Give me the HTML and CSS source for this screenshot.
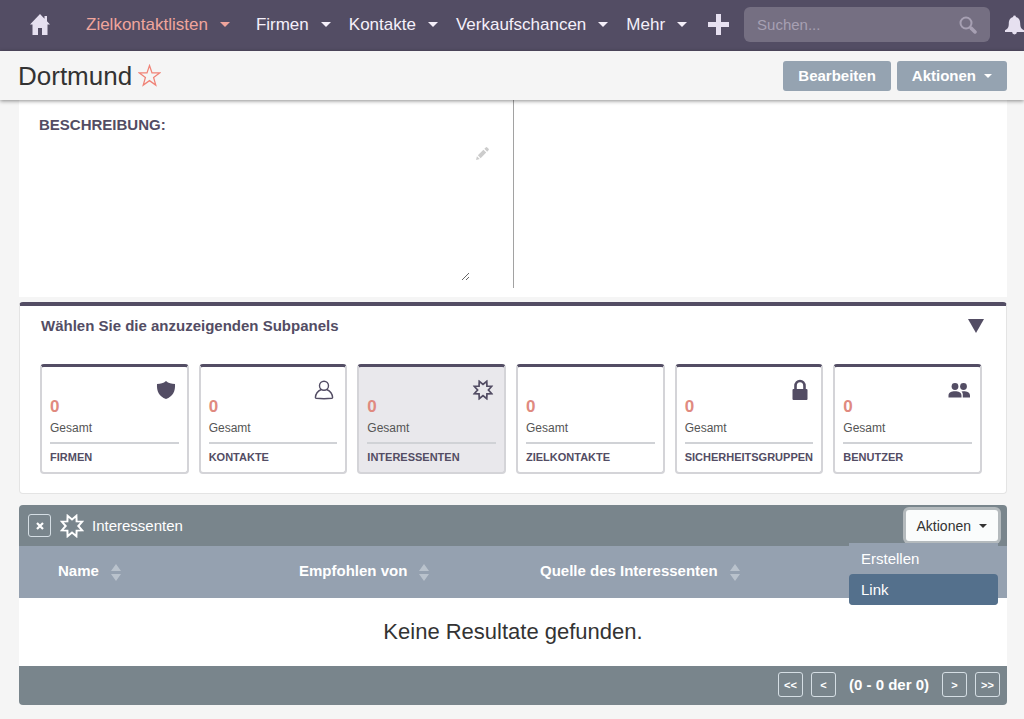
FILE: index.html
```html
<!DOCTYPE html>
<html lang="de">
<head>
<meta charset="utf-8">
<meta name="viewport" content="width=device-width, initial-scale=1">
<title>Dortmund</title>
<link rel="stylesheet" href="styles.css">
</head>
<body>
<svg class="sprite" aria-hidden="true">
  <symbol id="caret" viewBox="0 0 10 5"><path d="M0 0h10L5 5z" fill="currentColor"/></symbol>
  <symbol id="burst" viewBox="0 0 24 24"><path d="M22.200 7.600 18.300 12l3.900 4.400-5.600.2-.2 5.600L12 18.500l-4.400 3.700-.2-5.600-5.600-.2L5.700 12 1.800 7.600l5.600-.2.200-5.600L12 5.500l4.400-3.700.2 5.600z" fill="none" stroke="currentColor" stroke-width="2"/></symbol>
  <symbol id="sort" viewBox="0 0 10 18"><path d="M0 7 5 0l5 7zM0 10h10l-5 7z" fill="currentColor"/></symbol>
</svg>

<nav class="topbar">
  <a class="home" href="#" aria-label="Start"><svg viewBox="0 0 20 21"><path d="M10 0 0 10.500h2.500V21H8v-7h4v7h5.500V10.500H20l-3-3.200V2h-2.500v2.700z" fill="currentColor"/></svg></a>
  <div class="menu">
    <a class="menu-item active" href="#">Zielkontaktlisten<svg class="caret"><use href="#caret"/></svg></a>
    <a class="menu-item" href="#">Firmen<svg class="caret"><use href="#caret"/></svg></a>
    <a class="menu-item" href="#">Kontakte<svg class="caret"><use href="#caret"/></svg></a>
    <a class="menu-item" href="#">Verkaufschancen<svg class="caret"><use href="#caret"/></svg></a>
    <a class="menu-item" href="#">Mehr<svg class="caret"><use href="#caret"/></svg></a>
  </div>
  <button class="add" type="button" aria-label="Neu"><svg viewBox="0 0 21 21"><path d="M8 0h5v8h8v5h-8v8H8v-8H0V8h8z" fill="currentColor"/></svg></button>
  <form class="search">
    <input class="search-input" type="search" aria-label="Suchen" placeholder="Suchen...">
    <button class="search-button" type="button" aria-label="Suche starten"><svg viewBox="0 0 18 18"><circle cx="7" cy="7" r="5.500" fill="none" stroke="currentColor" stroke-width="2"/><path d="m12 12 4 4" stroke="currentColor" stroke-width="3.500" stroke-linecap="round"/></svg></button>
  </form>
  <button class="bell" type="button" aria-label="Benachrichtigungen"><svg viewBox="0 0 20 21"><path d="M8.500 2.500a1.500 1.500 0 0 1 3 0C15 3.500 16 6.500 16 9.500c0 4.500 1.500 6 4 7V18.500H12.500a2.500 2.500 0 0 1-5 0H0v-2c2.500-1 4-2.500 4-7 0-3 1-6 4.500-7z" fill="currentColor"/></svg></button>
</nav>

<header class="titlebar">
  <h1 class="title">Dortmund</h1>
  <button class="favorite" type="button" aria-label="Favorit"><svg viewBox="0 0 22 22"><path d="m11 1.500 2.400 7h7.300l-5.800 4.400 2.100 7.300-6-4.300-6 4.300 2.100-7.300L1.300 8.500h7.300z" fill="none" stroke="currentColor" stroke-width="1.200"/></svg></button>
  <div class="title-actions">
    <button class="button" type="button">Bearbeiten</button>
    <button class="button" type="button">Aktionen<svg class="caret small"><use href="#caret"/></svg></button>
  </div>
</header>

<main class="content">
  <section class="detail">
    <div class="detail-field">
      <label class="field-label" for="description">BESCHREIBUNG:</label>
      <div class="field-body">
        <textarea class="description" id="description" readonly></textarea>
        <button class="edit" type="button" aria-label="Bearbeiten"><svg viewBox="0 0 14 14"><path d="M0 14 1 10l3 3zM2 9l6-6 3 3-6 6zM9 2l1.500-1.500q.8-.8 1.600 0l1.400 1.400q.8.800 0 1.600L12 5z" fill="currentColor"/></svg></button>
      </div>
    </div>
    <div class="detail-blank"></div>
  </section>

  <section class="selector">
    <div class="selector-head">
      <h2 class="selector-title">Wählen Sie die anzuzeigenden Subpanels</h2>
      <button class="toggle" type="button" aria-label="Einklappen"><svg viewBox="0 0 16 14"><path d="M0 0h16L8 14z" fill="currentColor"/></svg></button>
    </div>
    <div class="cards">
      <button class="card" type="button">
        <svg class="card-icon" viewBox="0 0 24 24"><path d="M12 3c2.500 2.300 5.500 3 9 3 .5 7-2 12.500-9 15C5 18.500 2.500 13 3 6c3.500 0 6.500-.7 9-3z" fill="currentColor"/></svg>
        <span class="count">0</span><span class="total">Gesamt</span><span class="name">FIRMEN</span>
      </button>
      <button class="card" type="button">
        <svg class="card-icon" viewBox="0 0 24 24"><g fill="none" stroke="currentColor" stroke-width="1.400"><circle cx="12" cy="7.800" r="4.500"/><path d="M9.300 11.500C6 13 3.600 16 3.400 19.500q0 .7.800.8 7.800.8 15.600 0 .8-.1.800-.8c-.2-3.500-2.600-6.500-5.900-8"/></g></svg>
        <span class="count">0</span><span class="total">Gesamt</span><span class="name">KONTAKTE</span>
      </button>
      <button class="card selected" type="button">
        <svg class="card-icon" viewBox="-2 -2 28 28"><use href="#burst" width="24" height="24"/></svg>
        <span class="count">0</span><span class="total">Gesamt</span><span class="name">INTERESSENTEN</span>
      </button>
      <button class="card" type="button">
        <span class="count">0</span><span class="total">Gesamt</span><span class="name">ZIELKONTAKTE</span>
      </button>
      <button class="card" type="button">
        <svg class="card-icon" viewBox="0 0 24 24"><rect x="4.500" y="11" width="15" height="11" rx="1" fill="currentColor"/><path d="M7.500 12V8a4.500 5 0 0 1 9 0v4" fill="none" stroke="currentColor" stroke-width="2.600"/></svg>
        <span class="count">0</span><span class="total">Gesamt</span><span class="name">SICHERHEITSGRUPPEN</span>
      </button>
      <button class="card" type="button">
        <svg class="card-icon" viewBox="0 0 24 24"><g fill="currentColor"><circle cx="8" cy="8.500" r="3.400"/><circle cx="16.500" cy="8.500" r="3.400"/><path d="M1.500 19.500v-2c0-3 3-4.200 6.500-4.200s6.500 1.200 6.500 4.200v2zM15.800 19.500H23v-2c0-3-3-4.200-6.500-4.200l-2 .200c1 1 1.500 2.300 1.300 4z"/></g></svg>
        <span class="count">0</span><span class="total">Gesamt</span><span class="name">BENUTZER</span>
      </button>
    </div>
  </section>

  <section class="subpanel">
    <div class="subpanel-head">
      <button class="square close" type="button" aria-label="Schließen"><svg viewBox="0 0 8 8"><path d="m1 1 6 6M7 1 1 7" stroke="currentColor" stroke-width="2.200"/></svg></button>
      <svg class="subpanel-icon"><use href="#burst"/></svg>
      <h2 class="subpanel-title">Interessenten</h2>
      <div class="dropdown">
        <button class="dropdown-button" type="button">Aktionen<svg class="caret small"><use href="#caret"/></svg></button>
        <div class="dropdown-menu">
          <a class="dropdown-item" href="#">Erstellen</a>
          <a class="dropdown-item current" href="#">Link</a>
        </div>
      </div>
    </div>
    <table class="results">
      <thead>
        <tr>
          <th class="col">Name<svg class="sort"><use href="#sort"/></svg></th>
          <th class="col">Empfohlen von<svg class="sort"><use href="#sort"/></svg></th>
          <th class="col">Quelle des Interessenten<svg class="sort"><use href="#sort"/></svg></th>
          <th></th>
        </tr>
      </thead>
      <tbody>
        <tr><td class="empty" colspan="4">Keine Resultate gefunden.</td></tr>
      </tbody>
    </table>
    <div class="pager">
      <button class="square page" type="button">&lt;&lt;</button>
      <button class="square page" type="button">&lt;</button>
      <span class="range">(0 - 0 der 0)</span>
      <button class="square page" type="button">&gt;</button>
      <button class="square page" type="button">&gt;&gt;</button>
    </div>
  </section>
</main>
</body>
</html>
```

FILE: styles.css
```css
* { box-sizing: border-box; }

body {
  margin: 0;
  background: #f5f5f5;
  color: #534d64;
  font-family: "Liberation Sans", Arial, sans-serif;
  font-size: 15px;
}

button {
  padding: 0;
  border: 0;
  background: none;
  color: inherit;
  font: inherit;
  cursor: pointer;
}

a { color: inherit; text-decoration: none; }
svg { display: block; flex: none; }
h1, h2 { margin: 0; font-weight: normal; }

.sprite { position: absolute; width: 0; height: 0; }
.caret { width: 10px; height: 5px; }
.caret.small { width: 8px; height: 4px; }

.topbar {
  display: flex;
  align-items: center;
  height: 51px;
  padding: 0 0 2px 30px;
  overflow: hidden;
  background: #534d64;
  color: #e6e0f0;
}
.home svg { width: 20px; height: 21px; }
.menu {
  display: flex;
  gap: 18px;
  margin-left: 36px;
  color: #f5f0fa;
  font-size: 17px;
  line-height: 20px;
}
.menu-item { display: flex; align-items: center; gap: 12px; }
.menu-item.active { margin-right: 8px; color: #f0a59c; }
.add { margin-left: 21px; }
.add svg { width: 21px; height: 21px; }
.search {
  display: flex;
  flex: 1;
  align-items: center;
  min-width: 0;
  height: 35px;
  margin: 0 15px;
  padding: 0 13px;
  border-radius: 6px;
  background: #756f82;
  color: #a7a0b3;
}
.search-input {
  flex: 1;
  min-width: 0;
  padding: 0;
  border: 0;
  outline: 0;
  background: none;
  color: #fff;
  font: inherit;
}
.search-input::placeholder { color: #a7a0b3; opacity: 1; }
.search-button svg { width: 18px; height: 18px; }
.bell svg { width: 19px; height: 21px; }

.titlebar {
  position: relative;
  display: flex;
  align-items: center;
  height: 49px;
  padding: 0 17px 0 18px;
  background: #f5f5f5;
  box-shadow: 0 1px 4px rgba(0, 0, 0, 0.45);
}
.title { color: #333; font-size: 26px; line-height: 30px; }
.favorite { margin-left: 6px; color: #f08377; }
.favorite svg { width: 23px; height: 23px; }
.title-actions { display: flex; gap: 6px; margin-left: auto; }
.button {
  display: flex;
  align-items: center;
  gap: 8px;
  height: 30px;
  padding: 0 15px;
  border-radius: 3px;
  background: #95a3b1;
  color: #fff;
  font-weight: bold;
}

.content { padding: 0 17px 14px 19px; }

.detail {
  display: grid;
  grid-template-columns: repeat(2, minmax(0, 1fr));
  padding-bottom: 9px;
  background: #fff;
}
.detail-field { padding: 16px 24px 7px 20px; }
.detail-blank { border-left: 1px solid #a2a2a2; }
.field-label { display: block; font-weight: bold; line-height: 18px; }
.field-body { display: flex; align-items: flex-start; gap: 6px; margin-top: 13px; }
.description {
  flex: 1;
  min-width: 0;
  height: 134px;
  padding: 0;
  border: 0;
  outline: 0;
  resize: both;
  font: inherit;
}
.edit { color: #ccc; }
.edit svg { width: 13px; height: 13px; }

.selector {
  margin-top: 5px;
  padding: 11px 24px 19px 20px;
  border: 1px solid #e4e4e4;
  border-top: 4px solid #534d64;
  border-radius: 4px;
  background: #fff;
}
.selector-head {
  display: flex;
  align-items: center;
  justify-content: space-between;
  padding-left: 1px;
}
.selector-title { font-size: 15px; font-weight: bold; line-height: 18px; }
.toggle { margin-right: -2px; }
.toggle svg { width: 16px; height: 14px; }
.cards {
  display: grid;
  grid-template-columns: repeat(6, minmax(0, 1fr));
  gap: 10px;
  margin-top: 29px;
}
.card {
  position: relative;
  display: flex;
  flex-direction: column;
  height: 110px;
  padding: 30px 8px 0;
  border: 2px solid #d4d4d8;
  border-top: 3px solid #534d64;
  border-radius: 4px;
  background: #fff;
  text-align: left;
}
.card.selected { background: #e9e8ec; }
.card-icon { position: absolute; top: 11px; right: 9px; width: 24px; height: 24px; }
.count { color: #e08a80; font-size: 17px; font-weight: bold; line-height: 20px; }
.total {
  padding: 4px 0 7px;
  border-bottom: 2px solid #d0d2d6;
  color: #555;
  font-size: 12px;
  line-height: 14px;
}
.name { margin-top: 6px; font-size: 11px; font-weight: bold; line-height: 14px; white-space: nowrap; }

.subpanel { margin-top: 11px; border-radius: 4px; background: #79858c; color: #fff; }
.subpanel-head { display: flex; align-items: center; height: 41px; padding: 0 9px; }
.square {
  display: flex;
  align-items: center;
  justify-content: center;
  border: 1px solid #d5dee4;
  border-radius: 3px;
}
.close { width: 23px; height: 23px; }
.close svg { width: 8px; height: 8px; }
.subpanel-icon { width: 24px; height: 24px; margin-left: 9px; }
.subpanel-title { margin-left: 8px; font-size: 15px; line-height: 18px; }
.dropdown { position: relative; margin-left: auto; }
.dropdown-button {
  display: flex;
  align-items: center;
  gap: 8px;
  height: 31px;
  padding: 0 11px;
  border-radius: 3px;
  background: #fafcfc;
  box-shadow: 0 0 0 3px #b4babd;
  color: #333;
  font-size: 14px;
}
.dropdown-menu {
  position: absolute;
  top: 33px;
  right: 0;
  z-index: 1;
  width: 149px;
  border-radius: 0 0 4px 4px;
  background: #95a1b0;
}
.dropdown-item { display: block; padding: 0 12px; line-height: 31px; }
.dropdown-item.current { border-radius: 4px; background: #54708c; }

.results { width: 100%; border-collapse: collapse; table-layout: fixed; }
.results th {
  height: 52px;
  padding: 0 0 0 39px;
  background: #95a1b0;
  line-height: 18px;
  text-align: left;
}
.results .col { width: 241px; white-space: nowrap; }
.sort {
  display: inline-block;
  width: 10px;
  height: 18px;
  margin-left: 12px;
  color: #b9c2cc;
  vertical-align: -6px;
}
.empty {
  height: 68px;
  padding: 0;
  background: #fff;
  color: #333;
  font-size: 22px;
  text-align: center;
}

.pager {
  display: flex;
  align-items: center;
  justify-content: flex-end;
  gap: 8px;
  height: 39px;
  padding: 0 7px 2px 0;
}
.page { width: 25px; height: 25px; font-size: 11px; font-weight: bold; }
.range { margin: 0 5px; font-weight: bold; }
```
